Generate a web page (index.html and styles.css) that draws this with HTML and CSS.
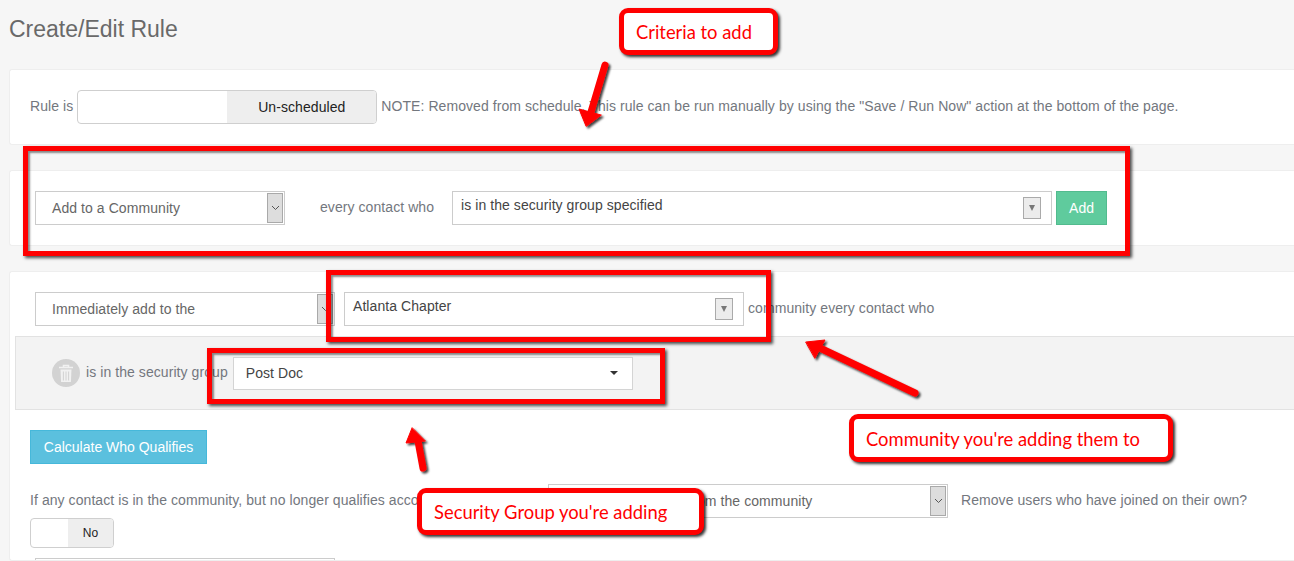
FILE: index.html
```html
<!DOCTYPE html>
<html lang="en">
<head>
<meta charset="utf-8">
<title>Create/Edit Rule</title>
<link rel="stylesheet" href="styles.css">
</head>
<body>
<main class="page">
  <h1 class="title">Create/Edit Rule</h1>

  <section class="panel panel-schedule">
    <div class="row">
      <span class="label">Rule is</span>
      <div class="toggle toggle-wide"><span class="toggle-blank"></span><span class="toggle-state">Un-scheduled</span></div>
      <span class="label">NOTE: Removed from schedule. This rule can be run manually by using the "Save / Run Now" action at the bottom of the page.</span>
    </div>
  </section>

  <section class="panel panel-criteria">
    <div class="row">
      <div class="select select-action">
        <span class="select-text">Add to a Community</span>
        <span class="select-btn"><svg width="9" height="6" viewBox="0 0 9 6"><path d="M1 1l3.5 3.5L8 1" fill="none" stroke="#555" stroke-width="1"/></svg></span>
      </div>
      <span class="label label-every">every contact who</span>
      <div class="combo combo-criteria">
        <span class="combo-text">is in the security group specified</span>
        <span class="combo-btn"><i class="tri"></i></span>
      </div>
      <button class="btn btn-add">Add</button>
    </div>
  </section>

  <section class="panel panel-rule">
    <div class="row row-when">
      <div class="select select-when">
        <span class="select-text">Immediately add to the</span>
        <span class="select-btn"><svg width="9" height="6" viewBox="0 0 9 6"><path d="M1 1l3.5 3.5L8 1" fill="none" stroke="#555" stroke-width="1"/></svg></span>
      </div>
      <div class="combo combo-community">
        <span class="combo-text">Atlanta Chapter</span>
        <span class="combo-btn"><i class="tri"></i></span>
      </div>
      <span class="label label-community">community every contact who</span>
    </div>

    <div class="criterion">
      <span class="trash">
        <svg width="16" height="19" viewBox="0 0 16 19"><path d="M1 3.5h14M5.5 3V1.5h5V3" fill="none" stroke="#f1f1f1" stroke-width="1.6"/><path d="M2.5 5.5h11l-.6 12.5H3.100z" fill="#f1f1f1"/><path d="M5.400 7.500v9M8 7.500v9M10.600 7.500v9" stroke="#d2d2d2" stroke-width="1"/></svg>
      </span>
      <span class="label">is in the security group</span>
      <div class="dropdown">
        <span>Post Doc</span>
        <i class="caret"></i>
      </div>
    </div>

    <div class="actions">
      <button class="btn btn-calc">Calculate Who Qualifies</button>
    </div>

    <div class="row row-remove">
      <span class="label label-if">If any contact is in the community, but no longer qualifies according to the criteria</span>
      <div class="select select-remove">
        <span class="select-text">Immediately remove from the community</span>
        <span class="select-btn"><svg width="9" height="6" viewBox="0 0 9 6"><path d="M1 1l3.5 3.5L8 1" fill="none" stroke="#555" stroke-width="1"/></svg></span>
      </div>
      <span class="label label-own">Remove users who have joined on their own?</span>
    </div>

    <div class="toggle toggle-small"><span class="toggle-blank"></span><span class="toggle-state">No</span></div>

    <div class="select select-last"></div>
  </section>
</main>

<div class="mark mark-criteria"></div>
<div class="mark mark-community"></div>
<div class="mark mark-group"></div>

<svg class="arrows" width="1294" height="561" viewBox="0 0 1294 561">
  <defs>
    <filter id="shade" x="-30%" y="-30%" width="160%" height="160%"><feDropShadow dx="2" dy="2" stdDeviation="1.2" flood-color="#000" flood-opacity=".75"/></filter>
  </defs>
  <g filter="url(#shade)" fill="#f00" stroke="#f00" stroke-linejoin="round" stroke-linecap="round">
    <path d="M605 65L591 112" fill="none" stroke-width="7"/>
    <path d="M586 126L579 109L601 115Z" stroke-width="1"/>
    <path d="M915 393L822 349" fill="none" stroke-width="7"/>
    <path d="M806 342L825 340L815 358Z" stroke-width="1"/>
    <path d="M423 468L418 441" fill="none" stroke-width="7"/>
    <path d="M412 428L406 443L425 441Z" stroke-width="1"/>
  </g>
</svg>

<div class="note note-criteria">Criteria to add</div>
<div class="note note-community">Community you're adding them to</div>
<div class="note note-group">Security Group you're adding</div>
</body>
</html>
```

FILE: styles.css
```css
html, body {
  margin: 0;
  height: 561px;
  overflow: hidden;
}

body {
  position: relative;
  background: #f6f6f6;
  font-family: "Liberation Sans", Arial, sans-serif;
  font-size: 14px;
  letter-spacing: .07px;
  color: #73777e;
}

.page {
  padding: 15px 0 0 9px;
}

.title {
  margin: 0 0 25px;
  height: 29px;
  font-size: 23px;
  line-height: 29px;
  font-weight: 400;
  letter-spacing: 0;
  color: #696969;
  white-space: nowrap;
}

.panel {
  box-sizing: border-box;
  background: #fff;
  border: 1px solid #eeeeee;
  border-right: 0;
  border-radius: 3px 0 0 3px;
  margin-bottom: 25px;
}

.panel-schedule {
  height: 76px;
  padding: 20px 0 0 20px;
}

.panel-criteria {
  height: 76px;
  padding: 20px 0 0 25px;
}

.panel-rule {
  height: 290px;
  margin-bottom: 0;
  padding-top: 20px;
  overflow: hidden;
}

.row {
  display: flex;
  align-items: center;
  white-space: nowrap;
}

.label {
  margin-bottom: 2px;
  white-space: nowrap;
}

.toggle {
  display: flex;
  box-sizing: border-box;
  background: #fff;
  border: 1px solid #cfcfcf;
  border-radius: 4px;
  overflow: hidden;
  color: #222;
}

.toggle-blank {
  flex: 1;
}

.toggle-state {
  display: flex;
  align-items: center;
  justify-content: center;
  background: #eeeeee;
}

.toggle-wide {
  width: 300px;
  height: 34px;
  margin: 0 4px;
}

.toggle-wide .toggle-state {
  width: 149px;
}

.toggle-small {
  width: 84px;
  height: 30px;
  margin: 0 0 10px 20px;
  font-size: 12px;
}

.toggle-small .toggle-state {
  width: 45px;
}

.select {
  display: flex;
  box-sizing: border-box;
  height: 34px;
  background: #fff;
  border: 1px solid #cccccc;
  color: #666;
  flex-shrink: 0;
}

.select-text {
  flex: 1;
  align-self: center;
  padding-left: 16px;
}

.select-btn {
  display: flex;
  align-items: center;
  justify-content: center;
  width: 14px;
  margin: 1px;
  background: #dddddd;
  border: 1px solid #a9a9a9;
}

.select-action {
  width: 250px;
}

.label-every {
  margin-left: 35px;
  margin-right: 18px;
}

.combo {
  display: flex;
  box-sizing: border-box;
  height: 34px;
  background: #fff;
  border: 1px solid #cccccc;
  color: #444;
  flex-shrink: 0;
}

.combo-text {
  flex: 1;
  padding: 5px 0 0 8px;
  line-height: 16px;
}

.combo-btn {
  display: flex;
  align-items: center;
  justify-content: center;
  box-sizing: border-box;
  width: 18px;
  height: 22px;
  margin: 5px 10px 0 0;
  background: #ececec;
  border: 1px solid #aaaaaa;
}

.tri {
  width: 0;
  height: 0;
  border-left: 3.5px solid transparent;
  border-right: 3.5px solid transparent;
  border-top: 6px solid #777;
}

.combo-criteria {
  width: 600px;
}

.btn {
  box-sizing: border-box;
  height: 34px;
  padding: 0;
  color: #fff;
  font: 14px "Liberation Sans", Arial, sans-serif;
  border-radius: 0;
}

.btn-add {
  width: 51px;
  margin-left: 4px;
  background: #5fcb9d;
  border: 1px solid #52bb8e;
}

.row-when {
  padding-left: 25px;
  height: 34px;
}

.select-when {
  width: 300px;
}

.combo-community {
  width: 400px;
  margin-left: 9px;
}

.label-community {
  margin-left: 4px;
}

.criterion {
  display: flex;
  align-items: center;
  box-sizing: border-box;
  height: 74px;
  margin: 10px 0 20px 5px;
  padding-left: 36px;
  background: #f3f3f3;
  border: 1px solid #e2e2e2;
  border-right: 0;
  white-space: nowrap;
}

.trash {
  display: flex;
  align-items: center;
  justify-content: center;
  width: 28px;
  height: 28px;
  margin-right: 6px;
  border-radius: 50%;
  background: #d2d2d2;
}

.dropdown {
  display: flex;
  align-items: center;
  justify-content: space-between;
  box-sizing: border-box;
  width: 400px;
  height: 33px;
  margin-left: 5px;
  padding: 0 14px 0 12px;
  background: #fff;
  border: 1px solid #d4d4d4;
  color: #444;
}

.caret {
  width: 0;
  height: 0;
  border-left: 4px solid transparent;
  border-right: 4px solid transparent;
  border-top: 4px solid #333;
}

.actions {
  padding-left: 20px;
}

.btn-calc {
  display: block;
  width: 177px;
  background: #5bc0de;
  border: 1px solid #46b8da;
}

.row-remove {
  position: relative;
  height: 34px;
  margin-top: 20px;
  padding-left: 20px;
}

.label-if {
  width: 518px;
  overflow: hidden;
  flex-shrink: 0;
}

.select-remove {
  width: 400px;
}

.select-remove .select-text {
  padding-left: 8px;
}

.label-own {
  margin-left: 13px;
}

.select-last {
  width: 300px;
  margin-left: 25px;
}

.mark {
  position: absolute;
  box-sizing: border-box;
  border: 5px solid #f00;
  box-shadow: 2px 2px 3px rgba(0, 0, 0, .7), inset 2px 2px 2px rgba(0, 0, 0, .45);
}

.mark-criteria {
  left: 23px;
  top: 146px;
  width: 1107px;
  height: 110px;
}

.mark-community {
  left: 326px;
  top: 270px;
  width: 445px;
  height: 72px;
}

.mark-group {
  left: 207px;
  top: 348px;
  width: 458px;
  height: 56px;
}

.arrows {
  position: absolute;
  left: 0;
  top: 0;
  pointer-events: none;
}

.note {
  position: absolute;
  box-sizing: border-box;
  display: flex;
  align-items: center;
  padding-left: 12px;
  background: #fff;
  border: 5px solid #f00;
  border-radius: 9px;
  box-shadow: 2px 2px 3px rgba(0, 0, 0, .8);
  color: #f00;
  font-family: Lato, sans-serif;
  font-size: 18.4px;
  letter-spacing: 0;
  white-space: nowrap;
}

.note-criteria {
  left: 619px;
  top: 8px;
  width: 159px;
  height: 47px;
}

.note-community {
  left: 849px;
  top: 414px;
  width: 324px;
  height: 48px;
  padding-top: 1px;
}

.note-group {
  left: 417px;
  top: 488px;
  width: 287px;
  height: 47px;
}
```
